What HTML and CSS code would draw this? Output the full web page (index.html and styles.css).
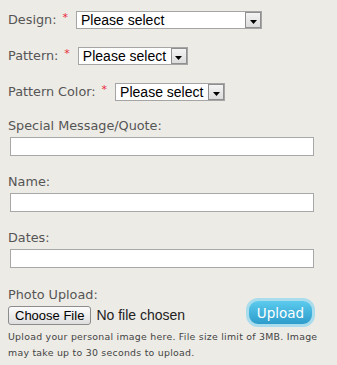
FILE: index.html
```html
<!DOCTYPE html>
<html lang="en">
  <head>
    <meta charset="UTF-8" />
    <meta name="viewport" content="width=device-width, initial-scale=1.0" />
    <title>Custom Order</title>
    <link rel="stylesheet" href="styles.css">
  </head>
  <body>
    <form class="order-form">
      <!-- Dropdown options -->
      <div class="select-row">
        <label>Design:</label>
        <span class="req">*</span>
        <div class="fake-select design">
          <span class="fake-select-text">Please select</span>
          <span class="arrow-box"><svg width="7" height="4" viewBox="0 0 7 4"><path d="M0 0H7L3.5 4Z" fill="#000"/></svg></span>
        </div>
      </div>
      <div class="select-row">
        <label>Pattern:</label>
        <span class="req">*</span>
        <div class="fake-select short">
          <span class="fake-select-text">Please select</span>
          <span class="arrow-box"><svg width="7" height="4" viewBox="0 0 7 4"><path d="M0 0H7L3.5 4Z" fill="#000"/></svg></span>
        </div>
      </div>
      <div class="select-row">
        <label>Pattern Color:</label>
        <span class="req">*</span>
        <div class="fake-select short">
          <span class="fake-select-text">Please select</span>
          <span class="arrow-box"><svg width="7" height="4" viewBox="0 0 7 4"><path d="M0 0H7L3.5 4Z" fill="#000"/></svg></span>
        </div>
      </div>

      <!-- Text fields -->
      <div class="field">
        <label for="quote">Special Message/Quote:</label>
        <input type="text" id="quote" />
      </div>
      <div class="field">
        <label for="name">Name:</label>
        <input type="text" id="name" />
      </div>
      <div class="field">
        <label for="dates">Dates:</label>
        <input type="text" id="dates" />
      </div>

      <!-- Photo upload -->
      <div class="upload-section">
        <label>Photo Upload:</label>
        <div class="upload-row">
          <span class="choose-btn">Choose File</span>
          <span class="no-file">No file chosen</span>
          <button type="button" class="upload-btn">Upload</button>
        </div>
        <p class="upload-note">Upload your personal image here. File size limit of 3MB. Image may take up to 30 seconds to upload.</p>
      </div>
    </form>
  </body>
</html>
```

FILE: styles.css
```css
* {
  box-sizing: border-box;
  margin: 0;
  padding: 0;
}
body {
  background: #edebe6;
  font-family: "DejaVu Sans", Verdana, sans-serif;
  font-size: 12.8px;
  color: #555;
}
.order-form {
  padding: 11px 0 0 8px;
  width: 337px;
}
.select-row {
  display: flex;
  align-items: center;
  height: 18px;
  margin-bottom: 18px;
}
.select-row label {
  line-height: 18px;
}
.req {
  color: #e8283a;
  font-size: 11px;
  margin: 0 8px 0 6px;
  position: relative;
  top: -3px;
}
.fake-select {
  display: flex;
  align-items: center;
  height: 18px;
  border: 1px solid #a5a5a5;
  background: #fff;
  font-family: "Liberation Sans", Arial, sans-serif;
  font-size: 14px;
  color: #000;
}
.fake-select.design {
  width: 186px;
}
.fake-select.short {
  width: 110px;
}
.fake-select-text {
  flex: 1;
  padding-left: 4px;
  line-height: 16px;
  white-space: nowrap;
  overflow: hidden;
}
.arrow-box {
  display: flex;
  align-items: center;
  justify-content: center;
  width: 16px;
  height: 16px;
  border: 1px solid #8f8f8f;
  background: linear-gradient(#f4f4f4, #dcdcdc);
  padding-top: 3px;
}
.select-row:nth-child(3) {
  margin-bottom: 17px;
}
.field {
  margin-bottom: 18px;
}
.field label {
  display: block;
  line-height: 15px;
  margin-bottom: 4px;
}
.field input {
  display: block;
  margin-left: 2px;
  width: 304px;
  height: 19px;
  border: 1px solid #a8a8a8;
  background: #fff;
}
.upload-section {
  padding-top: 1px;
}
.upload-section label {
  display: block;
  line-height: 15px;
}
.upload-row {
  display: flex;
  align-items: flex-start;
  width: 307px;
  height: 25px;
}
.choose-btn {
  margin-top: 4px;
  height: 19px;
  padding: 0 6px;
  border: 1px solid #8c8c8c;
  border-radius: 3px;
  background: linear-gradient(#fcfcfc, #dedede);
  font-family: "Liberation Sans", Arial, sans-serif;
  font-size: 13px;
  line-height: 17px;
  color: #000;
}
.no-file {
  margin: 4px 0 0 5px;
  font-family: "Liberation Sans", Arial, sans-serif;
  font-size: 14px;
  line-height: 19px;
  color: #222;
}
.upload-btn {
  margin: -4px 0 0 auto;
  width: 69px;
  height: 29px;
  border: 3px solid #a9dcec;
  border-radius: 12px;
  background: linear-gradient(#5ccbee, #2d9ccb);
  color: #fff;
  font-family: "DejaVu Sans", Verdana, sans-serif;
  font-size: 13.5px;
}
.upload-note {
  margin-top: 2px;
  font-size: 9.4px;
  line-height: 16px;
  letter-spacing: 0.25px;
  color: #444;
  width: 320px;
}
```
